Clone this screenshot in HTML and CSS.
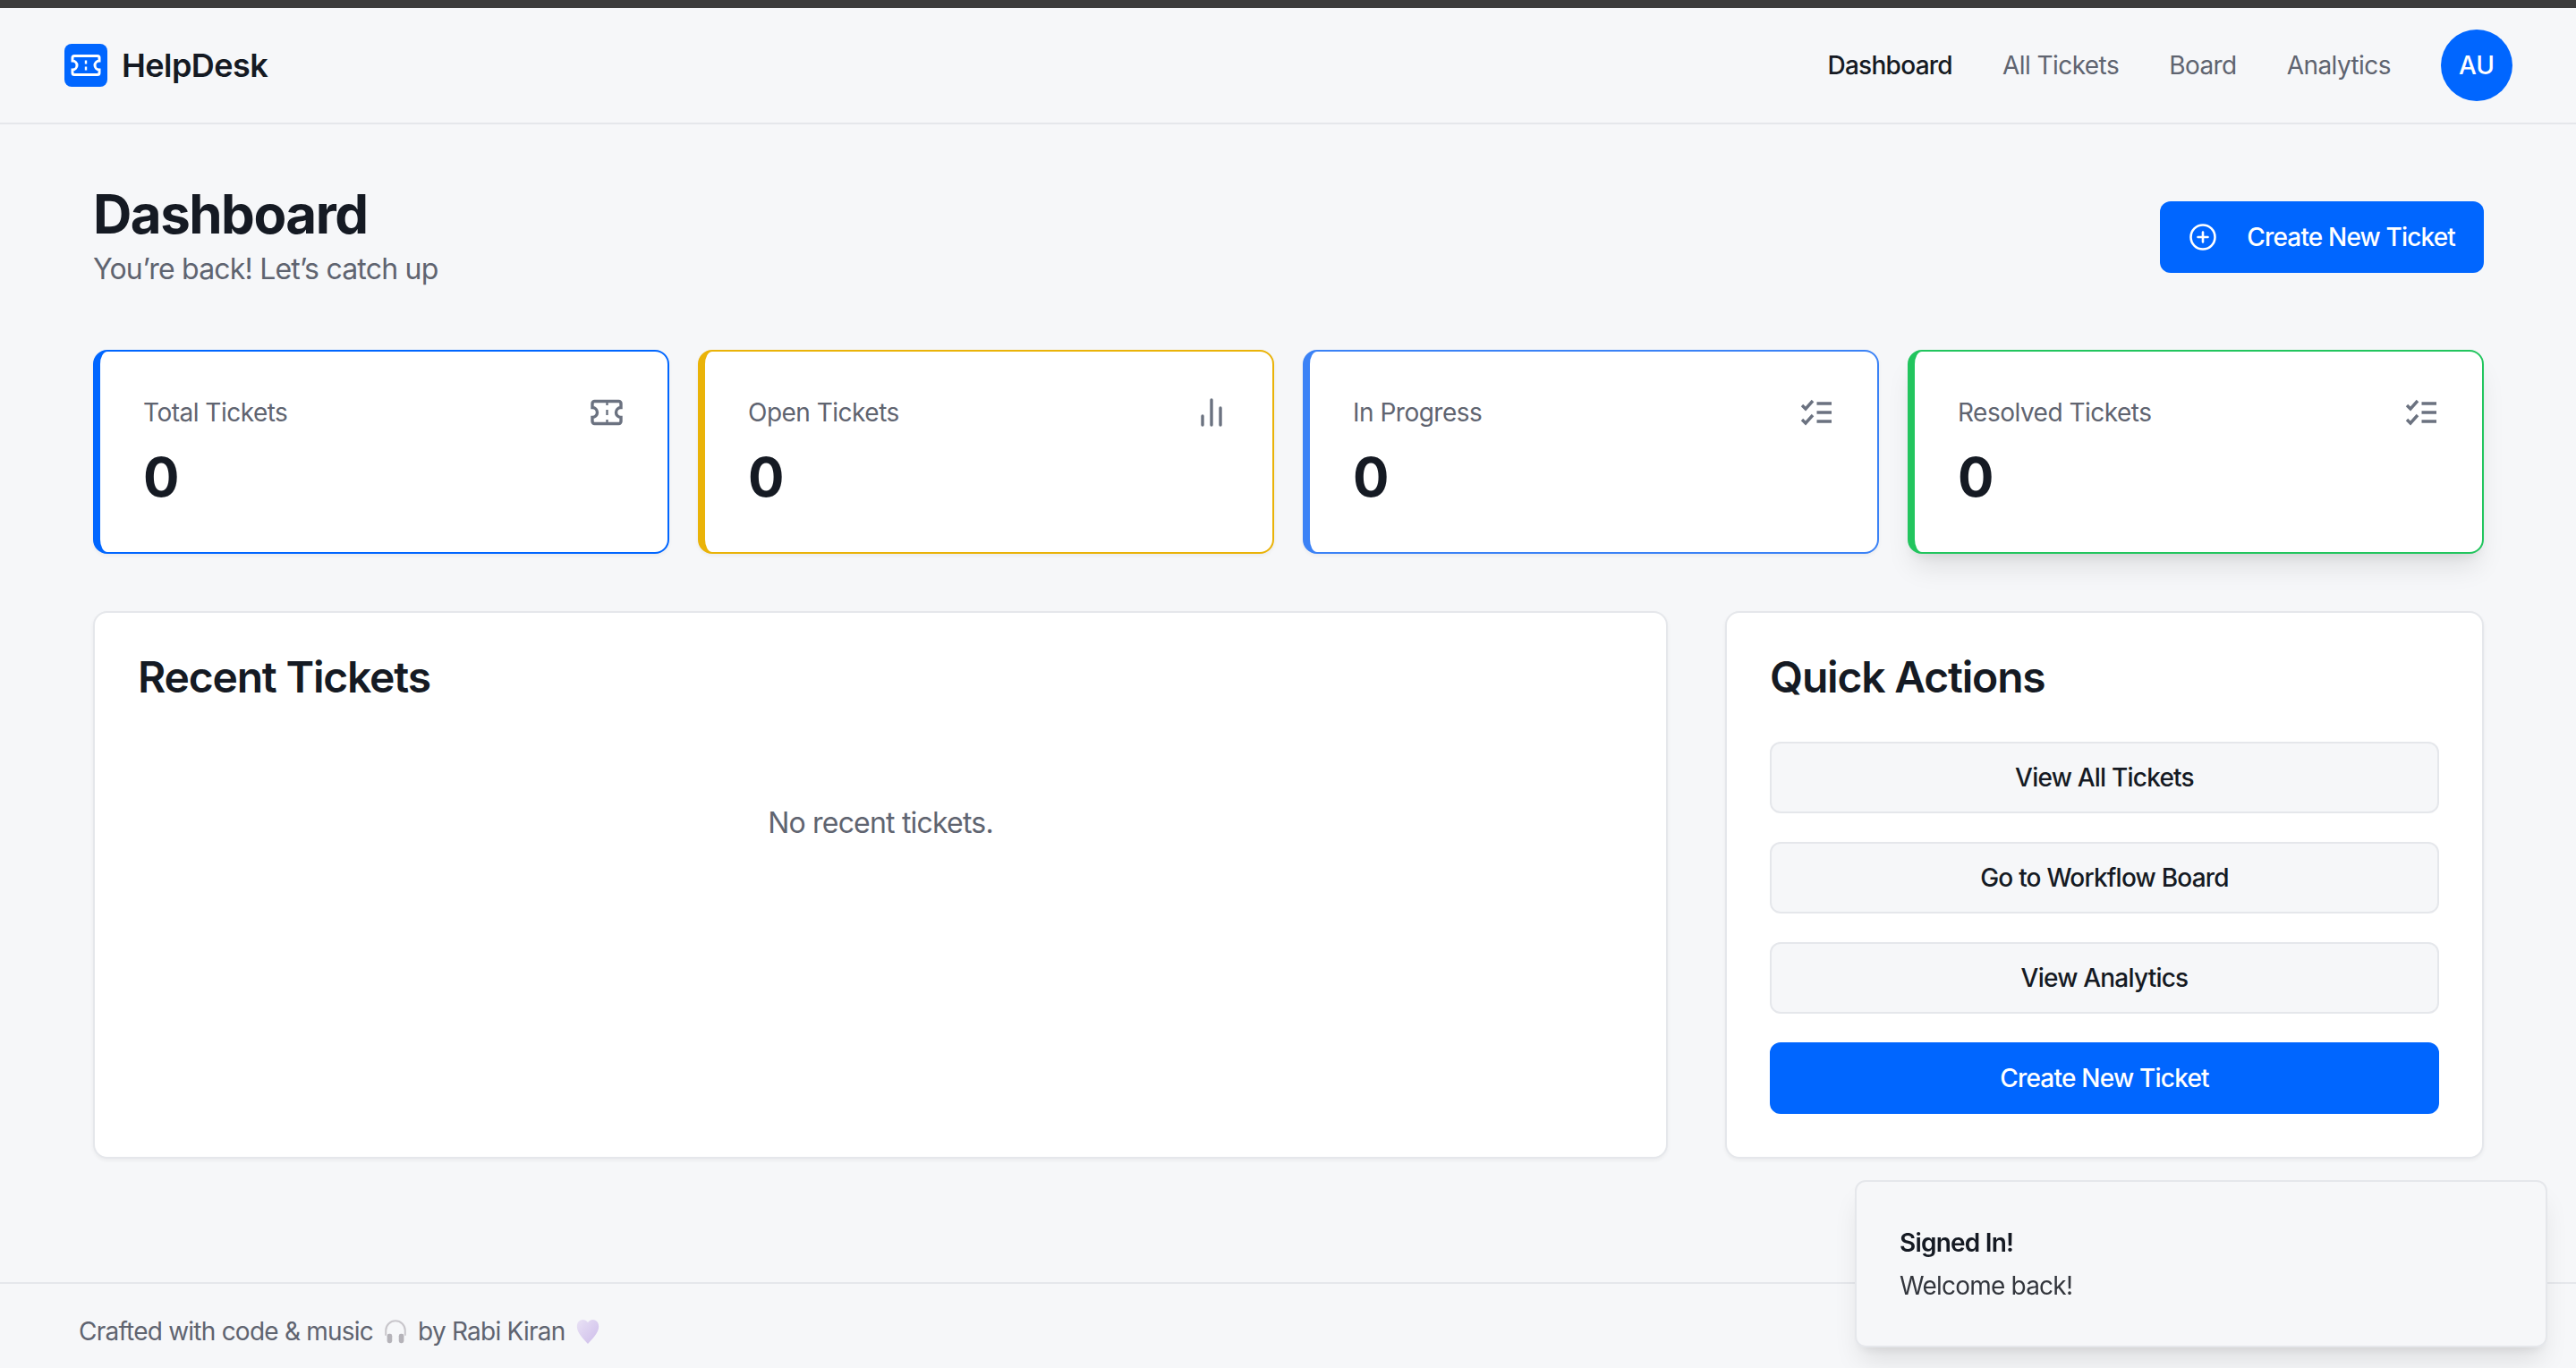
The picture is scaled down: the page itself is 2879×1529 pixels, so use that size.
FILE: index.html
```html
<!DOCTYPE html>
<html lang="en">
  <head>
    <meta charset="UTF-8" />
    <meta name="viewport" content="width=device-width, initial-scale=1.0" />
    <title>HelpDesk</title>
    <link rel="stylesheet" href="styles.css">
  </head>
  <body>
    <div class="topbar"></div>
    <nav class="nav">
      <div class="brand">
        <span class="brand-mark">
          <svg viewBox="0 0 40 40" width="40" height="40" fill="none" stroke="#fff" stroke-width="3">
            <path d="M7 9.500h26a2 2 0 0 1 2 2V15a5 5 0 0 0 0 10v3.500a2 2 0 0 1-2 2H7a2 2 0 0 1-2-2V25a5 5 0 0 0 0-10v-3.500a2 2 0 0 1 2-2z" />
            <path d="M20 14.500v4M20 21.500v4" stroke-width="2.400" />
          </svg>
        </span>
        <span class="brand-name">HelpDesk</span>
      </div>
      <div class="nav-links">
        <a class="nav-link active">Dashboard</a>
        <a class="nav-link">All Tickets</a>
        <a class="nav-link">Board</a>
        <a class="nav-link">Analytics</a>
        <span class="avatar">AU</span>
      </div>
    </nav>

    <main class="main">
      <header class="page-header">
        <div>
          <h1>Dashboard</h1>
          <p class="subtitle">You’re back! Let’s catch up</p>
        </div>
        <button class="btn-create">
          <svg viewBox="0 0 32 32" width="32" height="32" fill="none" stroke="#fff" stroke-width="2.600" stroke-linecap="round">
            <circle cx="16" cy="16" r="13.500" />
            <path d="M16 10.500v11M10.500 16h11" />
          </svg>
          <span>Create New Ticket</span>
        </button>
      </header>

      <section class="stats">
        <div class="stat stat-blue">
          <div class="stat-top">
            <span class="stat-label">Total Tickets</span>
            <svg class="stat-icon" viewBox="0 0 40 40" fill="none" stroke="#6b7280" stroke-width="3.400">
              <path d="M6.500 7.500h27a2.500 2.500 0 0 1 2.500 2.500v4.500a5.500 5.500 0 0 0 0 11V30a2.500 2.500 0 0 1-2.500 2.500h-27A2.500 2.500 0 0 1 4 30v-4.500a5.500 5.500 0 0 0 0-11V10a2.500 2.500 0 0 1 2.500-2.500z" />
              <path d="M20.500 7v5M20.500 17v6M20.500 28v5" stroke-width="2.400" />
            </svg>
          </div>
          <div class="stat-value">0</div>
        </div>
        <div class="stat stat-yellow">
          <div class="stat-top">
            <span class="stat-label">Open Tickets</span>
            <svg class="stat-icon" viewBox="0 0 40 40" fill="none" stroke="#6b7280" stroke-width="3.400" stroke-linecap="round">
              <path d="M10 24v10M20 6v28M30 15v19" />
            </svg>
          </div>
          <div class="stat-value">0</div>
        </div>
        <div class="stat stat-sky">
          <div class="stat-top">
            <span class="stat-label">In Progress</span>
            <svg class="stat-icon" viewBox="0 0 40 40" fill="none" stroke="#6b7280" stroke-width="3.400">
              <path d="M4 12l4 4 8-9M4 28l4 4 8-9M20.500 10h16.500M20.500 20h16.500M20.500 30h16.500" />
            </svg>
          </div>
          <div class="stat-value">0</div>
        </div>
        <div class="stat stat-green">
          <div class="stat-top">
            <span class="stat-label">Resolved Tickets</span>
            <svg class="stat-icon" viewBox="0 0 40 40" fill="none" stroke="#6b7280" stroke-width="3.400">
              <path d="M4 12l4 4 8-9M4 28l4 4 8-9M20.500 10h16.500M20.500 20h16.500M20.500 30h16.500" />
            </svg>
          </div>
          <div class="stat-value">0</div>
        </div>
      </section>

      <section class="panels">
        <div class="panel">
          <h2>Recent Tickets</h2>
          <p class="empty">No recent tickets.</p>
        </div>
        <div class="panel">
          <h2>Quick Actions</h2>
          <div class="actions">
            <button class="action">View All Tickets</button>
            <button class="action">Go to Workflow Board</button>
            <button class="action">View Analytics</button>
            <button class="action action-primary">Create New Ticket</button>
          </div>
        </div>
      </section>
    </main>

    <footer class="footer">
      <span>Crafted with code &amp; music</span>
      <svg class="emoji" viewBox="0 0 32 32" width="30" height="30" fill="none">
        <path d="M4.500 21V15a11.500 11.500 0 0 1 23 0v6" stroke="#c9c7cc" stroke-width="2.200" />
        <rect x="6" y="19" width="6" height="11" rx="2.500" fill="#b5b3b9" />
        <rect x="20" y="19" width="6" height="11" rx="2.500" fill="#b5b3b9" />
      </svg>
      <span>by Rabi Kiran</span>
      <svg class="emoji" viewBox="0 0 32 32" width="30" height="30">
        <defs>
          <linearGradient id="heart" x1="0" y1="0" x2="1" y2="1">
            <stop offset="0" stop-color="#e9e2f5" />
            <stop offset="1" stop-color="#cdbcea" />
          </linearGradient>
        </defs>
        <path d="M16 31C11 25 3 18 3 10 3 5 6.500 2 10 2c2.500 0 5 1.500 6 3.500C17 3.500 19.500 2 22 2c3.500 0 7 3 7 8 0 8-8 15-13 21z" fill="url(#heart)" />
      </svg>
    </footer>

    <div class="toast">
      <div class="toast-title">Signed In!</div>
      <div class="toast-text">Welcome back!</div>
    </div>
  </body>
</html>
```

FILE: styles.css
```css
* {
  box-sizing: border-box;
}

body {
  margin: 0;
  min-height: 100vh;
  display: flex;
  flex-direction: column;
  background: #f6f7f9;
  color: #151a23;
  font-family: Inter, "Noto Sans", sans-serif;
}

button {
  font-family: inherit;
  cursor: pointer;
}

h1,
h2,
p {
  margin: 0;
}

.topbar {
  height: 9px;
  background: #3c3c3c;
}

.nav {
  display: flex;
  justify-content: space-between;
  align-items: center;
  padding: 24px 71px 24px 72px;
  border-bottom: 2px solid #e5e7eb;
}

.brand {
  display: flex;
  align-items: center;
  gap: 16px;
}

.brand-mark {
  width: 48px;
  height: 48px;
  display: flex;
  align-items: center;
  justify-content: center;
  background: #0066ff;
  border-radius: 8px;
}

.brand-name {
  font-size: 36px;
  font-weight: 600;
  letter-spacing: -0.015em;
}

.nav-links {
  display: flex;
  align-items: center;
  gap: 56px;
}

.nav-link {
  font-size: 28px;
  letter-spacing: -0.02em;
  color: #5f6470;
}

.nav-link.active {
  color: #151a23;
  font-weight: 500;
  letter-spacing: -0.026em;
}

.avatar {
  width: 80px;
  height: 80px;
  display: flex;
  align-items: center;
  justify-content: center;
  border-radius: 50%;
  background: #0066ff;
  color: #fff;
  font-size: 28px;
  font-weight: 500;
}

.main {
  flex: 1;
  padding: 64px 103px 64px 104px;
}

.page-header {
  display: flex;
  justify-content: space-between;
  align-items: center;
  margin-bottom: 64px;
}

h1 {
  font-size: 60px;
  line-height: 72px;
  font-weight: 700;
  letter-spacing: -0.025em;
}

.subtitle {
  font-size: 32px;
  line-height: 52px;
  letter-spacing: -0.025em;
  color: #5f6470;
}

.btn-create {
  height: 80px;
  display: flex;
  align-items: center;
  gap: 33px;
  padding: 0 32px;
  border: none;
  border-radius: 12px;
  background: #0066ff;
  color: #fff;
  font-size: 28px;
  font-weight: 500;
  letter-spacing: -0.03em;
}

.stats {
  display: grid;
  grid-template-columns: repeat(4, 1fr);
  gap: 32px;
  margin-bottom: 64px;
}

.stat {
  height: 228px;
  padding: 48px;
  background: #fff;
  border: 2px solid;
  border-left-width: 8px;
  border-radius: 16px;
  box-shadow: 0 2px 4px rgba(0, 0, 0, 0.05);
}

.stat-blue {
  border-color: #0066ff;
}

.stat-yellow {
  border-color: #eab308;
}

.stat-sky {
  border-color: #3b82f6;
}

.stat-green {
  border-color: #22c55e;
  box-shadow: 0 20px 30px -6px rgba(0, 0, 0, 0.1), 0 8px 12px -6px rgba(0, 0, 0, 0.08);
}

.stat-top {
  display: flex;
  justify-content: space-between;
  align-items: center;
  height: 40px;
  margin-bottom: 16px;
}

.stat-label {
  font-size: 28px;
  letter-spacing: -0.018em;
  color: #5f6470;
}

.stat-icon {
  width: 40px;
  height: 40px;
}

.stat-value {
  font-size: 60px;
  line-height: 72px;
  font-weight: 700;
}

.panels {
  display: grid;
  grid-template-columns: 1fr 848px;
  gap: 64px;
}

.panel {
  padding: 48px;
  background: #fff;
  border: 2px solid #e5e7eb;
  border-radius: 16px;
  box-shadow: 0 2px 4px rgba(0, 0, 0, 0.05);
}

h2 {
  font-size: 48px;
  line-height: 48px;
  font-weight: 600;
  letter-spacing: -0.025em;
}

.empty {
  margin-top: 115px;
  text-align: center;
  font-size: 32px;
  line-height: 48px;
  letter-spacing: -0.025em;
  color: #5f6470;
}

.actions {
  display: flex;
  flex-direction: column;
  gap: 32px;
  margin-top: 48px;
}

.action {
  height: 80px;
  background: #f6f7f9;
  border: 2px solid #e5e7eb;
  border-radius: 12px;
  color: #151a23;
  font-size: 28px;
  font-weight: 500;
  letter-spacing: -0.028em;
}

.action-primary {
  background: #0066ff;
  border-color: #0066ff;
  color: #fff;
}

.footer {
  height: 96px;
  display: flex;
  align-items: center;
  gap: 10px;
  padding: 12px 88px 0;
  border-top: 2px solid #e5e7eb;
  font-size: 28px;
  letter-spacing: -0.0275em;
  color: #5f6470;
}

.emoji {
  flex-shrink: 0;
}

.toast {
  position: fixed;
  right: 32px;
  bottom: 23px;
  width: 774px;
  height: 187px;
  padding: 48px;
  background: #f6f7f9;
  border: 2px solid #e5e7eb;
  border-radius: 12px;
  box-shadow: 0 20px 30px -6px rgba(0, 0, 0, 0.1), 0 8px 12px -6px rgba(0, 0, 0, 0.08);
}

.toast-title {
  font-size: 28px;
  line-height: 40px;
  font-weight: 600;
  letter-spacing: -0.028em;
  margin-bottom: 8px;
}

.toast-text {
  font-size: 28px;
  line-height: 40px;
  letter-spacing: -0.028em;
  color: #33363d;
}
```
